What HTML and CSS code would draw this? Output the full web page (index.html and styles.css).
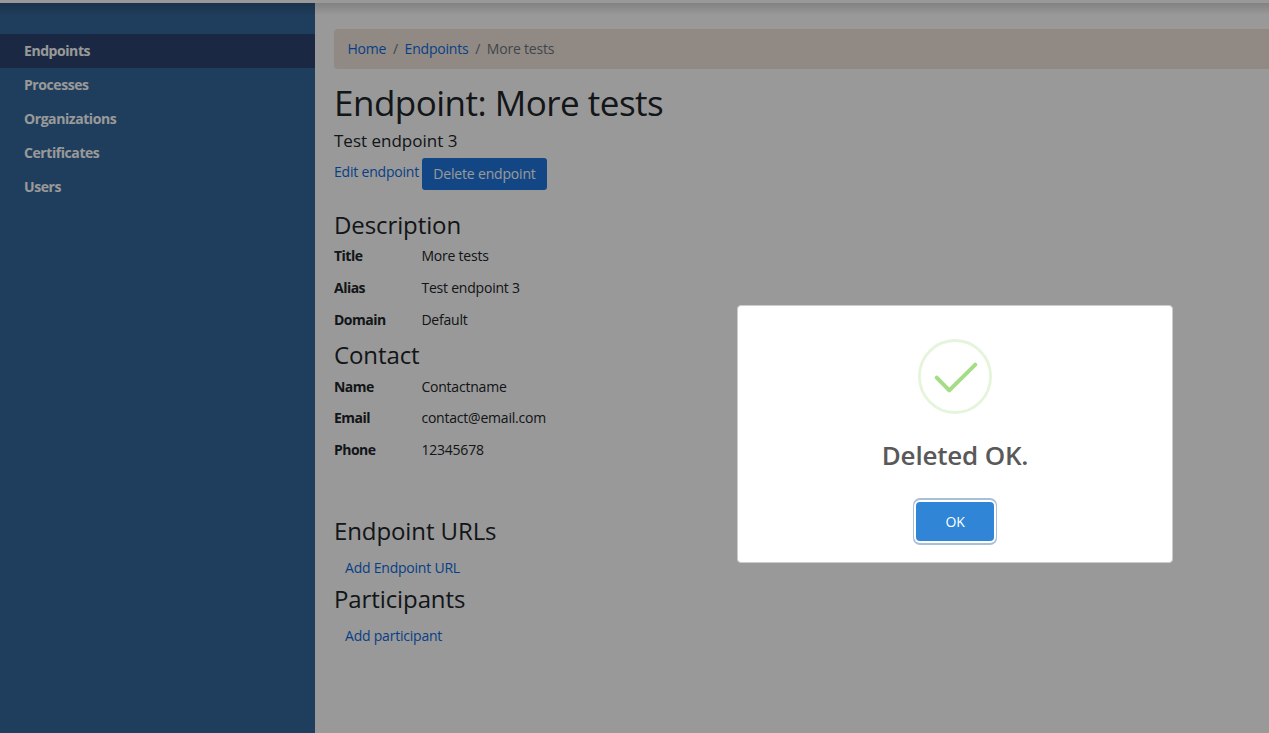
FILE: index.html
```html
<!DOCTYPE html>
<html lang="en">
<head>
<meta charset="utf-8">
<title>Endpoint: More tests</title>
<link rel="stylesheet" href="styles.css">
</head>
<body>
<div class="topbar"></div>
<div class="layout">
  <nav class="sidebar">
    <a class="nav-item active">Endpoints</a>
    <a class="nav-item">Processes</a>
    <a class="nav-item">Organizations</a>
    <a class="nav-item">Certificates</a>
    <a class="nav-item">Users</a>
  </nav>
  <main class="content">
    <div class="breadcrumb"><a>Home</a><i>/</i><a>Endpoints</a><i>/</i><span>More tests</span></div>
    <h1>Endpoint: More tests</h1>
    <p class="lead">Test endpoint 3</p>
    <div class="actions"><a class="edit">Edit endpoint</a><button class="btn">Delete endpoint</button></div>
    <h2>Description</h2>
    <dl class="details">
      <dt>Title</dt><dd>More tests</dd>
      <dt>Alias</dt><dd>Test endpoint 3</dd>
      <dt>Domain</dt><dd>Default</dd>
    </dl>
    <h2>Contact</h2>
    <dl class="details contact">
      <dt>Name</dt><dd>Contactname</dd>
      <dt>Email</dt><dd>contact@email.com</dd>
      <dt>Phone</dt><dd>12345678</dd>
    </dl>
    <h2 class="urls">Endpoint URLs</h2>
    <a class="add">Add Endpoint URL</a>
    <h2 class="participants">Participants</h2>
    <a class="add">Add participant</a>
  </main>
</div>
<div class="overlay"></div>
<div class="modal" role="dialog">
  <svg class="check" width="74" height="76" viewBox="0 0 74 76" fill="none">
    <ellipse cx="37" cy="37.5" rx="35.6" ry="36" stroke="#e4f5dc" stroke-width="2.8"/>
    <path d="M18.7 38.7L31.3 51.3M31.3 51.3L57.3 25.6" stroke="#a5dc86" stroke-width="4" stroke-linecap="round"/>
  </svg>
  <div class="modal-title">Deleted OK.</div>
  <button class="ok">OK</button>
</div>
</body>
</html>
```
FILE: styles.css
```css
* { box-sizing: border-box; }
body {
  margin: 0;
  height: 733px;
  overflow: hidden;
  position: relative;
  background: #fff;
  color: #212529;
  font: 14px/21px "Open Sans", sans-serif;
}
h1, h2, p, dl, dd { margin: 0; }
a { color: #0c6ae0; }
.topbar { height: 3px; background: #fff; }
.layout { display: flex; height: 730px; background: linear-gradient(rgba(0,0,0,.15), rgba(0,0,0,0) 12px) no-repeat; }
.sidebar {
  width: 315px;
  flex: none;
  padding-top: 31px;
  background: linear-gradient(rgba(0,0,0,.16), rgba(0,0,0,0) 12px), #346699;
}
.nav-item {
  display: flex;
  height: 34px;
  align-items: center;
  padding: 0 0 2px 24px;
  color: #fff;
  font-weight: 700;
  letter-spacing: -.43px;
}
.nav-item.active { background: #2c4472; }
.content { flex: 1; padding: 26px 0 0 19px; }
.breadcrumb {
  height: 40px;
  display: flex;
  align-items: center;
  padding: 0 0 2px 13.5px;
  border-radius: 4px 0 0 4px;
  background: #f2e6dc;
  color: #6c757d;
  letter-spacing: -.2px;
}
.breadcrumb i { font-style: normal; padding: 0 6.7px; }
h1 { font-size: 35px; font-weight: 400; line-height: 42px; margin-top: 13px; letter-spacing: -.51px; }
.lead { font-size: 17px; line-height: 24px; margin-top: 5px; }
.actions { display: flex; margin-top: 5px; }
.edit { width: 88px; padding-top: 3px; letter-spacing: -.2px; }
.btn {
  width: 125px;
  height: 32px;
  padding: 0 0 2px;
  border: 0;
  border-radius: 3px;
  background: #1e76dc;
  color: #fff;
  font: inherit;
  letter-spacing: -.18px;
}
h2 { font-size: 24px; font-weight: 400; line-height: 30px; letter-spacing: -.1px; }
.actions + h2 { margin-top: 20px; }
.details { display: grid; grid-template-columns: 87.4px 1fr; grid-auto-rows: 32px; padding-top: 5px; height: 100px; }
.details dt { font-weight: 700; letter-spacing: -.52px; }
.details dd { letter-spacing: -.21px; }
.details.contact { height: 146px; padding-top: 6px; grid-auto-rows: 31.4px; }
.add { display: block; padding: 11px 0 0 11px; letter-spacing: -.22px; }
.participants { margin-top: 6px; }
.overlay { position: absolute; inset: 0; background: rgba(0,0,0,.4); }
.modal {
  position: absolute;
  left: 737px;
  top: 305px;
  width: 436px;
  height: 258px;
  padding-top: 33px;
  border: 1px solid #ccc;
  border-radius: 4px;
  background: #fff;
  display: flex;
  flex-direction: column;
  align-items: center;
}
.check { flex: none; }
.modal-title { margin-top: 22px; font-size: 26px; font-weight: 600; line-height: 36px; letter-spacing: -.2px; color: #595959; }
.ok {
  width: 78px;
  height: 39px;
  margin-top: 29px;
  padding: 0;
  border: 0;
  border-radius: 4px;
  background: #3085d6;
  box-shadow: 0 0 0 2px #fff, 0 1px 0 3px #a8bfd8, 0 -1px 0 3px #a8bfd8;
  color: #fff;
  font: 14px "Open Sans", sans-serif;
  letter-spacing: -.2px;
}
```
